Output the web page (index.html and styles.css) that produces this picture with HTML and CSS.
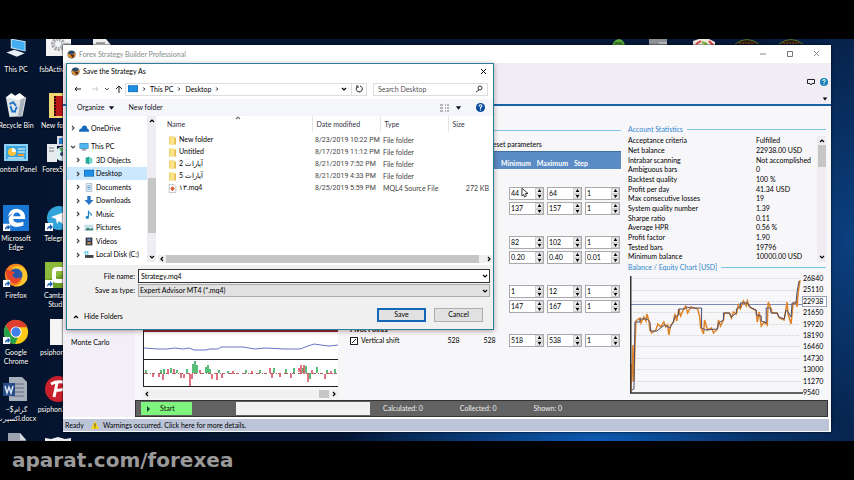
FILE: index.html
```
<!DOCTYPE html>
<html lang="en">
<head>
  <meta charset="UTF-8">
  <meta name="viewport" content="width=device-width, initial-scale=1.0">
  <title>Forex Strategy Builder Professional</title>
  <link rel="stylesheet" href="styles.css">
</head>
<body>
  <svg width="0" height="0" class="defs">
    <symbol id="fsb" viewBox="0 0 16 16"><circle cx="8" cy="8" r="7" fill="#2b4a6a"/><path d="M1 5q6 7 14-1 1 9-7 11Q1 14 1 5" fill="#e8952a"/><path d="M6 9l4 5 4-6" fill="#5a2a10"/></symbol>
    <symbol id="folder" viewBox="0 0 16 16"><path d="M2 1h8l4 2v12H2z" fill="#f0cd58"/><path d="M4 1h7v14H4z" fill="#fae48d"/><path d="M13 3v12" stroke="#c9a339"/></symbol>
    <symbol id="shortcut" viewBox="0 0 8 8"><path d="M0 0h8v8H0z" fill="#fff"/><path d="M2 7q0-4 3-4V1l3 3-3 3V5Q3 5 2 7" fill="#1c5fb0"/></symbol>
    <symbol id="monitor" viewBox="0 0 16 16"><path d="M0 2h16v10H0z" fill="#2a7fb8"/><path d="M1 3h14v8H1z" fill="#4cb6ee"/><path d="M4 14h8" stroke="#777" stroke-width="2"/></symbol>
    <symbol id="screen" viewBox="0 0 16 12"><path d="M0 0h16v11H0z" fill="#1466ad"/><path d="M1 1h14v9H1z" fill="#1c90e4"/></symbol>
    <symbol id="help" viewBox="0 0 16 16"><circle cx="8" cy="8" r="8" fill="currentColor"/><path d="M5.500 6q0-3 2.500-3t2.500 2.500Q10.500 7 8 8v2M8 11.500v2" stroke="#fff" stroke-width="2" fill="none"/></symbol>
    <symbol id="right" viewBox="0 0 8 8"><path d="M3 2l2 2-2 2" fill="none" stroke="currentColor" stroke-width="1.200"/></symbol>
    <symbol id="left" viewBox="0 0 8 8"><path d="M5 2L3 4l2 2" fill="none" stroke="currentColor" stroke-width="1.200"/></symbol>
    <symbol id="down" viewBox="0 0 8 8"><path d="M2 3l2 2 2-2" fill="none" stroke="currentColor" stroke-width="1.200"/></symbol>
    <symbol id="up" viewBox="0 0 8 8"><path d="M2 5l2-2 2 2" fill="none" stroke="currentColor" stroke-width="1.200"/></symbol>
    <symbol id="close" viewBox="0 0 8 8"><path d="M1 1l5 5M6 1L1 6" fill="none" stroke="currentColor"/></symbol>
    <symbol id="caret" viewBox="0 0 8 8"><path d="M1 2h6L4 6z" fill="currentColor"/></symbol>
  </svg>

  <main class="desktop">
    <div class="shortcut pc">
      <svg viewBox="0 0 30 24"><path d="M9 0l17 3v12L9 11z" fill="#d5eefa"/><path d="M10 1l15 3v10L10 10z" fill="#45aef2"/><path d="M4 16l9-3 12 4-9 4z" fill="#e8f0f5"/></svg>
      <span>This PC</span>
    </div>
    <div class="shortcut bin">
      <svg viewBox="0 0 26 28"><path d="M2 5l22 1-4 20-14 1z" fill="#dfe4e8"/><path d="M3 5l5-4 4 3 5-3 6 5-8 3z" fill="#fff"/><path d="M18 8l5-2-4 20-4 1z" fill="#aab2ba"/><path d="M6 13l4-2 3 4M7 15l2 6h4M14 16l-2 4" stroke="#1e72c6" stroke-width="2" fill="none"/></svg>
      <span>Recycle Bin</span>
    </div>
    <div class="shortcut panel">
      <svg viewBox="0 0 26 20"><path d="M1 2h24v17H1z" fill="#8ed1f2"/><path d="M3 4h20v13H3z" fill="#3ca4dc"/><circle cx="9" cy="10" r="4" fill="#ffc43a"/><path d="M9 10V6a4 4 0 0 1 4 4z" fill="#fff"/><path d="M15 7h7M15 10h7M5 16h16" stroke="#fff"/><path d="M15 13h6" stroke="#ff9c2a" stroke-width="2"/></svg>
      <span>Control Panel</span>
    </div>
    <div class="shortcut edge">
      <svg viewBox="0 0 28 28"><path d="M0 0h28v28H0z" fill="#1976d2"/><path d="M5 13Q7 4 15 4q9 1 9 11H11q1 6 11 3v4q-15 5-16-6 0-4 5-7-4 1-6 4m6-1h8q-1-4-4-4-3 0-4 4" fill="#fff"/><use href="#shortcut" y="20" width="8" height="8"/></svg>
      <span>Microsoft<br>Edge</span>
    </div>
    <div class="shortcut firefox">
      <svg viewBox="0 0 28 28"><circle cx="14" cy="14" r="12" fill="#f5841f"/><path d="M6 3l4 3q6-4 12 0 6 6 4 13-5 9-15 7 10-1 9-10 0-6-8-8z" fill="#ffc62e"/><circle cx="14" cy="14" r="7" fill="#2457a8"/><path d="M3 8q3 0 6 2l4 1-3 3q3 6 9 2-1 8-8 7Q3 20 3 8" fill="#e6452c"/><use href="#shortcut" y="19" width="8" height="8"/></svg>
      <span>Firefox</span>
    </div>
    <div class="shortcut chrome">
      <svg viewBox="0 0 28 28"><circle cx="14" cy="14" r="13" fill="#fbc917"/><path d="M3 7a13 13 0 0 1 23 2H14a6 6 0 0 0-5 8z" fill="#df3d2e"/><path d="M3 7l6 10q2 4 7 3l-3 7A13 13 0 0 1 3 7" fill="#27a04b"/><circle cx="14" cy="14" r="6" fill="#fff"/><circle cx="14" cy="14" r="5" fill="#3f7fe8"/><use href="#shortcut" y="19" width="8" height="8"/></svg>
      <span>Google<br>Chrome</span>
    </div>
    <div class="shortcut docx">
      <svg viewBox="0 0 26 26"><path d="M6 1h13l5 5v19H6z" fill="#a7afbb"/><path d="M9 8h12M9 12h12M9 16h12M9 20h12" stroke="#616d80"/><path d="M0 7h12v13H0z" fill="#264d87"/><path d="M2 10l2 7 2-6 2 6 2-7" fill="none" stroke="#dce5f3" stroke-width="1.500"/></svg>
      <span>~$گرام<br>اکسپرت.docx</span>
    </div>
    <div class="shortcut doc">
      <svg viewBox="0 0 26 26"><path d="M5 0h12l6 7v19H5z" fill="#9ca2af"/><path d="M17 0v7h6" fill="#d5d9e0"/></svg>
    </div>
    <div class="shortcut act">
      <svg viewBox="0 0 26 26"><path d="M1 0h25v20H1z" fill="#f4f4f4"/><circle cx="13" cy="8" r="5" fill="none" stroke="#a5a9ad" stroke-width="4" stroke-dasharray="2 1"/><circle cx="22" cy="12" r="4" fill="none" stroke="#b5b9bd" stroke-width="3"/></svg>
      <span>fsbActivator</span>
    </div>
    <div class="shortcut newf">
      <svg viewBox="0 0 26 26"><path d="M4 1h15l4 3v22H4z" fill="#f2d675"/><path d="M9 4h14v20H9z" fill="#b81818"/><path d="M10 4v20M21 4v20" stroke="#320505" stroke-width="2" stroke-dasharray="2 1"/></svg>
      <span>New folder</span>
    </div>
    <div class="shortcut fst">
      <svg viewBox="0 0 26 26"><path d="M2 8h10v18H2z" fill="#e8ebed"/><path d="M12 0h11v10H12z" fill="#d4dadf"/><path d="M14 2h9v6h-9z" fill="#2879c7"/><circle cx="17" cy="18" r="7" fill="#d9eff0"/><circle cx="17" cy="18" r="2" fill="#347"/><path d="M4 12h5M4 15h5" stroke="#777"/><path d="M14 12l5 0-2 5" fill="#4aa860"/></svg>
      <span>ForexStrat</span>
    </div>
    <div class="shortcut tel">
      <svg viewBox="0 0 26 26"><circle cx="14" cy="13" r="12" fill="#34a5dc"/><path d="M6 12l16-6-3 14-5-4-2 3-1-5z" fill="#fff"/><use href="#shortcut" y="18" width="8" height="8"/></svg>
      <span>Telegram</span>
    </div>
    <div class="shortcut cam">
      <svg viewBox="0 0 26 26"><path d="M0 0h26v26H0z" fill="#6d9f2b"/><path d="M0 0h26v10L0 18z" fill="#8cbb3c"/><path d="M22 7H12q-3 0-3 3v6q0 3 3 3h10" fill="none" stroke="#fff" stroke-width="4"/><use href="#shortcut" y="18" width="8" height="8"/></svg>
      <span>Camtasia<br>Studio</span>
    </div>
    <div class="shortcut psi">
      <svg viewBox="0 0 26 26"><path d="M5 0h17v26H5z" fill="#f5f5f5"/></svg>
      <span>psiphon.dat</span>
    </div>
    <div class="shortcut psi3">
      <svg viewBox="0 0 26 26"><circle cx="13" cy="13" r="13" fill="#c8202c"/><path d="M6 8q5-3 12-2 6 2 2 6-3 3-9 2M12 7l-3 14" fill="none" stroke="#fff" stroke-width="3"/></svg>
      <span>psiphon3.exe</span>
    </div>
    <div class="shortcut last">
      <svg viewBox="0 0 26 8"><path d="M0 1l6 1 7-2 7 2 6-1v7H0z" fill="#eee"/><path d="M4 4q4 4 8 0M15 4q4 4 8 0" stroke="#222" fill="none"/></svg>
    </div>
    <svg class="toprow" viewBox="0 0 720 6"><path d="M0 0h13l5 6H0z" fill="#eee"/><path d="M3 4h9" stroke="#555"/><path d="M519 6q3-6 7-6t6 6" fill="#58a83c"/><path d="M522 4h7" stroke="#143d10"/><path d="M556 0h18v6h-18z" fill="#8d9196"/><path d="M566 4h8" stroke="#ddd"/><path d="M600 6V2l6-2h10l6 3v3z" fill="#f1e6de"/><path d="M603 5l5-3M616 2l4 4" stroke="#d84040" stroke-width="2"/><path d="M609 3l5 2" stroke="#73b82e" stroke-width="2"/><path d="M642 5q12-9 24 0M686 5q12-9 24 0" fill="#241a10" stroke="#55722a"/><path d="M646 4h16M690 4h16" stroke="#a4451f" stroke-dasharray="2 1"/></svg>

    <section class="window">
      <header class="titlebar">
        <svg class="ico"><use href="#fsb"/></svg>
        <h1>Forex Strategy Builder Professional</h1>
        <div class="winbuttons">
          <button aria-label="Minimize"><svg viewBox="0 0 8 8"><path d="M1 4h6" stroke="#888"/></svg></button>
          <button aria-label="Maximize"><svg viewBox="0 0 8 8"><path d="M1.500 1.500h5v5h-5z" fill="none" stroke="#777"/></svg></button>
          <button aria-label="Close"><svg><use href="#close"/></svg></button>
        </div>
      </header>
      <div class="ribbon">
        <div class="ribbontools">
          <button aria-label="Comments"><svg viewBox="0 0 8 8"><path d="M.5 1.500h7v4H5L4 7 3 5.500H.5z" fill="none" stroke="#222"/></svg></button>
          <button class="helpbtn" aria-label="Help"><svg><use href="#help"/></svg></button>
        </div>
        <svg class="ribboncaret"><use href="#caret"/></svg>
      </div>
      <div class="body">
        <nav class="side"><a href="#">Monte Carlo</a></nav>
        <div class="work">
          <div class="columns">
            <div class="minis">
              <svg viewBox="0 0 195 57" preserveAspectRatio="none">
                <path d="M0 0h195v2H0z" fill="#842434"/><path d="M.5 0v57M0 29.500h195M0 56.500h195" stroke="#222"/>
                <path d="M1 18l14 1 9 0 8-1 8 1 6-1 5 2h12l4-1h8l3-2 12 0h10l12 2 10-1 20 1h15l8-3 6-2 7 1 8 1 9-1" fill="none" stroke="#6d73c8"/>
                <path d="M1 43.500h193" stroke="#b36060" stroke-dasharray="4 2 1 1 3 3"/>
                <path d="M3 43v-3M18 43v-3M21 44v-5M28 43v-5M34 43v-3M44 43v-4M50 43V34M52 43V31M54 43v-8M63 43v-6M65 43V35M67 43v-4M76 43v-3M85 43v-2M103 43v-3M117 43v-3M131 43V38M143 43v-4M151 43v-5M160 43v-5M163 43V36M167 49v-6M174 43V37M184 43v-3M192 43v-4" stroke="#22a84c" stroke-width="1.500"/>
                <path d="M10 44v3M16 44v3M20 44v6M25 39v5M31 39v4M38 44v4M41 44v4M47 44V56M49 44v5M57 43v-3M69 44v5M74 44v6M79 44v4M90 41v3M109 41v3M127 43v-5M129 44v4M137 44v3M148 44v4M156 42v-4M158 44v-9M161 44v-9M165 44v8M169 44v-4M182 44v5M188 41v3" stroke="#d3435a" stroke-width="1.500"/>
              </svg>
              <div class="hscroll"><svg><use href="#left"/></svg><i></i><svg><use href="#right"/></svg></div>
            </div>
            <div class="params">
              <p class="preset">Preset parameters</p>
              <div class="phead"><b>Minimum</b><b>Maximum</b><b>Step</b></div>
              <div class="groups" id="groups"></div>
            </div>
            <aside class="stats">
              <h2>Account Statistics</h2>
              <div class="statbox">
                <table><tbody id="stats"></tbody></table>
                <div class="vscroll"><svg><use href="#up"/></svg><i></i><svg><use href="#down"/></svg></div>
              </div>
              <h2>Balance / Equity Chart [USD]</h2>
              <div class="chart">
                <svg viewBox="0 0 174 118" preserveAspectRatio="none">
                  <path d="M3 2.500h168M3 14.500h168M3 25.500h168M3 36.500h168M3 48.500h168M3 59.500h168M3 70.500h168M3 82.500h168M3 93.500h168M3 105.500h168" stroke="#dcdce0" stroke-dasharray="3 1"/>
                  <path d="M0 28.500h174" stroke="#8088b4"/>
                  <path d="M1 116L1 88 2 106 3 69 4 105 5 70 6 45 10 42 11 47 14 41 16 45 17 38 19 45 20 54 22 57 26 54 28 48 31 51 34 46 36 51 38 49 39 59 41 49 44 46 45 38 47 45 49 33 51 40 54 33 56 30 58 37 61 31 68 33 70 40 71 51 74 58 75 44 78 54 82 52 84 57 88 53 89 44 91 50 94 44 95 37 100 37 102 42 104 36 107 38 109 29 111 33 114 25 117 30 118 25 120 31 124 33 127 35 128 46 130 36 132 50 135 46 138 49 139 26 142 33 143 37 148 37 150 42 155 44 158 26 159 38 162 48 164 28 167 26 168 31 169 18 171 4" fill="none" stroke="#dd8428" stroke-width="1.500"/>
                  <path d="M2 114L4 113 5 46 10 46 10 43 17 43 20 46 21 55 27 55 32 51 35 49 40 52 43 47 45 41 49 39 49 33 55 33 57 31 61 32 72 32 72 52 76 54 88 53 89 47 94 44 94 37 100 37 102 41 107 37 107 33 111 31 111 27 118 27 122 32 127 34 127 39 132 40 132 45 137 47 137 32 141 32 142 37 148 37 150 41 155 43 157 34 159 36 162 41 163 27 167 27 168 16 170 5" fill="none" stroke="#4c4c6c"/>
                  <path d="M.75 0v117H174" fill="none" stroke="#333" stroke-width="1.500"/>
                </svg>
                <ol class="axis"><li>26840</li><li>25110</li><li class="now">22938</li><li>21650</li><li>19920</li><li>18190</li><li>16460</li><li>14730</li><li>13000</li><li>11270</li><li>9540</li></ol>
              </div>
            </aside>
          </div>
          <div class="runbar">
            <button class="start"><svg viewBox="0 0 8 8"><path d="M2 1l3 3-3 3z" fill="#143"/></svg>Start</button>
            <div class="progress"></div>
            <span>Calculated: 0</span><span>Collected: 0</span><span>Shown: 0</span>
          </div>
        </div>
      </div>
      <footer class="status">
        <span>Ready</span>
        <svg viewBox="0 0 10 10"><path d="M5 0l5 10H0z" fill="#f7d117"/><path d="M5 3v4M5 8v1" stroke="#222"/></svg>
        <a href="#">Warnings occurred. Click here for more details.</a>
      </footer>
    </section>

    <section class="dialog" role="dialog" aria-label="Save the Strategy As">
      <header class="dtitle">
        <svg class="ico"><use href="#fsb"/></svg><h2>Save the Strategy As</h2>
        <button aria-label="Close"><svg><use href="#close"/></svg></button>
      </header>
      <div class="nav">
        <svg class="arrows" viewBox="0 0 52 8"><path d="M8 4H2M4 2L2 4l2 2" fill="none" stroke="#222"/><path d="M19 4h6M23 2l2 2-2 2" fill="none" stroke="#ccc"/><path d="M32 3l2 2 2-2" fill="none" stroke="#555"/><path d="M46 8V1M43 4l3-3 3 3" fill="none" stroke="#222"/></svg>
        <div class="address">
          <svg class="scr"><use href="#screen"/></svg><svg><use href="#right"/></svg><span>This PC</span><svg><use href="#right"/></svg><span>Desktop</span><svg><use href="#right"/></svg>
          <svg class="push"><use href="#down"/></svg>
          <button aria-label="Refresh"><svg viewBox="0 0 8 8"><path d="M5 1a3 3 0 1 1-3 1V0M2 2h2" fill="none" stroke="#222"/></svg></button>
        </div>
        <div class="search"><input type="text" placeholder="Search Desktop" aria-label="Search Desktop"><svg viewBox="0 0 8 8"><circle cx="5" cy="3" r="2" fill="none" stroke="#333"/><path d="M4 5L1 7" stroke="#333"/></svg></div>
      </div>
      <div class="tools">
        <button>Organize <svg><use href="#caret"/></svg></button>
        <button>New folder</button>
        <button class="view" aria-label="View"><svg viewBox="0 0 10 8"><path d="M0 1h3M0 4h3M0 7h3M5 1h1M7 1h2M5 4h1M7 4h2M5 7h1M7 7h2" stroke="#777"/></svg><svg class="c"><use href="#caret"/></svg></button>
        <button class="helpbtn" aria-label="Help"><svg><use href="#help"/></svg></button>
      </div>
      <div class="browser">
        <ul class="tree">
          <li class="top gap"><svg class="x"><use href="#right"/></svg><svg class="i" viewBox="0 0 16 12"><path d="M0 11q0-5 4-5 1-5 5-5t4 5q3 0 3 5z" fill="#1569bd"/></svg>OneDrive</li>
          <li class="top"><svg class="x"><use href="#down"/></svg><svg class="i"><use href="#monitor"/></svg>This PC</li>
          <li><svg class="x"><use href="#right"/></svg><svg class="i" viewBox="0 0 16 16"><path d="M2 3l7-2v14l-7-2z" fill="#25a99c"/><path d="M9 2l5 2v8l-5 2z" fill="#6fd8cc"/></svg>3D Objects</li>
          <li class="on"><svg class="x"><use href="#right"/></svg><svg class="i"><use href="#screen"/></svg>Desktop</li>
          <li><svg class="x"><use href="#right"/></svg><svg class="i" viewBox="0 0 16 16"><path d="M3 1h10v14H3z" fill="#f3f7fa" stroke="#7c93a6"/><path d="M5 5h6M5 8h6M5 11h6" stroke="#3c8dca" stroke-width="1.500"/></svg>Documents</li>
          <li><svg class="x"><use href="#right"/></svg><svg class="i" viewBox="0 0 16 16"><path d="M5 0h6v7h5l-8 9-8-9h5z" fill="#2876c4"/></svg>Downloads</li>
          <li><svg class="x"><use href="#right"/></svg><svg class="i" viewBox="0 0 16 16"><path d="M7 1v11M7 2q1 4 5 5v3" fill="none" stroke="#1f86cf" stroke-width="2"/><circle cx="5" cy="13" r="3" fill="#1f86cf"/></svg>Music</li>
          <li><svg class="x"><use href="#right"/></svg><svg class="i" viewBox="0 0 16 16"><path d="M0 3h16v11H0z" fill="#c4dfeb"/><path d="M1 13l5-5 4 3 5-2v4z" fill="#357a61"/></svg>Pictures</li>
          <li><svg class="x"><use href="#right"/></svg><svg class="i" viewBox="0 0 16 16"><path d="M2 1h12v14H2z" fill="#36383f"/><path d="M5 3h6v4H5z" fill="#6a8ac0"/><path d="M5 9h6v4H5z" fill="#b38a5a"/></svg>Videos</li>
          <li><svg class="x"><use href="#right"/></svg><svg class="i" viewBox="0 0 16 16"><path d="M1 9h15v5H1z" fill="#3b4046"/><path d="M0 2h3v3H0zM4 2h3v3H4zM0 6h3v2H0zM4 6h3v2H4z" fill="#2fb5da"/></svg>Local Disk (C:)</li>
        </ul>
        <div class="vscroll"><svg><use href="#up"/></svg><i></i><svg><use href="#down"/></svg></div>
        <div class="files">
          <svg class="sort"><use href="#up"/></svg>
          <table>
            <thead><tr><th class="n">Name</th><th class="d">Date modified</th><th class="t">Type</th><th class="s">Size</th></tr></thead>
            <tbody>
              <tr><td><svg><use href="#folder"/></svg>New folder</td><td>8/23/2019 10:22 PM</td><td>File folder</td><td></td></tr>
              <tr><td><svg><use href="#folder"/></svg>Untitled</td><td>8/17/2019 11:12 PM</td><td>File folder</td><td></td></tr>
              <tr><td><svg><use href="#folder"/></svg>آپارات 2</td><td>8/21/2019 7:52 PM</td><td>File folder</td><td></td></tr>
              <tr><td><svg><use href="#folder"/></svg>آپارات 5</td><td>8/21/2019 4:33 PM</td><td>File folder</td><td></td></tr>
              <tr><td><svg viewBox="0 0 16 16"><path d="M2 1h9l3 3v11H2z" fill="#fff" stroke="#999"/><path d="M8 4l4 4-4 5-4-5z" fill="#d9542b"/></svg>۱۳.mq4</td><td>8/25/2019 5:59 PM</td><td>MQL4 Source File</td><td>272 KB</td></tr>
            </tbody>
          </table>
          <div class="hscroll"><svg><use href="#left"/></svg><i></i><svg><use href="#right"/></svg></div>
        </div>
      </div>
      <form class="save">
        <label for="fname">File name:</label>
        <div class="combo"><input id="fname" type="text" value="Strategy.mq4"><svg><use href="#down"/></svg></div>
        <label for="ftype">Save as type:</label>
        <div class="combo type"><select id="ftype"><option>Expert Advisor MT4 (*.mq4)</option></select><svg><use href="#down"/></svg></div>
      </form>
      <div class="actions">
        <button class="hide"><svg><use href="#up"/></svg>Hide Folders</button>
        <button class="ok">Save</button><button class="cancel">Cancel</button>
      </div>
    </section>
    <svg class="cursor" viewBox="0 0 8 11"><path d="M1 0v9l2-2 1 3 2-1-1-3h3z" fill="#fff" stroke="#222"/></svg>
  </main>
  <div class="watermark">aparat.com/forexea</div>
  <script src="script.js"></script>
</body>
</html>
```
FILE: styles.css
```
:root{--font:Lato,"Liberation Sans",sans-serif;--blue:#2f86cf;--line:#7cc4e6}
*{box-sizing:border-box}
body{margin:0;height:100vh;background:#000;color:#000;font:7px/9px var(--font);display:flex;flex-direction:column;padding-top:39px;overflow:hidden}
h1,h2,p,ul,ol{margin:0;padding:0;font-size:inherit;font-weight:normal;list-style:none}
a{color:inherit;text-decoration:none}
button,input,select{font:inherit;color:inherit;margin:0;padding:0;border:0;background:none;border-radius:0}
button{display:flex;align-items:center;justify-content:center}
svg{display:block;width:8px;height:8px;flex:none}
table{border-collapse:collapse}
th,td{padding:0;font-weight:normal;text-align:left}
.defs{position:absolute;width:0;height:0}
.ico{width:9px;height:9px}

/* desktop */
.desktop{flex:1;position:relative;overflow:hidden;background:radial-gradient(ellipse 260px 50px at 70% 100%,#0d5cb4,transparent),radial-gradient(ellipse 140px 260px at 100% 50%,#0b4080,transparent),linear-gradient(90deg,#04142f,#051a3c)}
.watermark{height:39px;padding-left:12px;color:#9a9a9a;font:bold 20px/39px "DejaVu Sans",sans-serif}
.shortcut{position:absolute;width:40px;display:flex;flex-direction:column;align-items:center;gap:3px;color:#fff;text-align:center;white-space:nowrap;text-shadow:0 1px 1px #000}
.shortcut svg{width:26px;height:26px}
.pc,.bin,.panel,.edge,.firefox,.chrome,.docx,.doc{left:-4px}
.act,.newf,.fst,.tel,.cam,.psi,.psi3,.last{left:38px}
.pc,.act{top:-3px}
.bin,.newf{top:53px}
.panel,.fst{top:97px}
.panel svg{padding-top:6px}
.edge,.tel{top:166px}
.firefox,.cam{top:223px}
.chrome,.psi{top:280px}
.docx,.psi3{top:337px}
.doc{top:394px}
.last{top:389px}
.toprow{position:absolute;left:93px;top:0;width:720px;height:6px}

/* main window */
.window{position:absolute;left:63px;right:23px;top:6px;bottom:9px;background:#f7f6f8;display:flex;flex-direction:column;box-shadow:0 0 2px #000}
.titlebar{height:18px;background:#fff;display:flex;align-items:center;gap:3px;padding:0 10px 0 4px;color:#888}
.winbuttons{margin-left:auto;display:flex;gap:19px}
.ribbon{height:43px;background:#f1edf4;border-bottom:2px solid #1763a6;padding:15px 3px 0;display:flex;flex-direction:column;align-items:flex-end;gap:10px}
.ribbontools{display:flex;align-items:center;gap:5px}
.helpbtn{color:#1683b8}
.ribboncaret{width:6px;height:6px}
.body{flex:1;display:flex;min-height:0}
.side{width:72px;background:#f2eff7;padding:232px 0 0 8px}
.work{flex:1;display:flex;flex-direction:column;min-width:0}
.columns{flex:1;display:flex;min-height:0}
.minis{flex:none;width:207px;padding:224px 4px 0 8px;display:flex;flex-direction:column;gap:3px}
.minis>svg{width:100%;height:57px;background:#fff}
.hscroll{display:flex;align-items:center;background:#f0f0f0;height:8px}
.minis .hscroll i{width:10px;height:8px;background:#c6c6c6;margin-left:auto;margin-right:1px}
.params{flex:1;min-width:0;padding-top:24px}
.preset{border-top:1px solid var(--line);padding:9px 0 0 144px}
.phead{height:18px;margin-top:2px;background:#5a8bc5;color:#fff;display:flex;align-items:flex-end;gap:6px;padding:0 33px 1px 0;justify-content:flex-end;border-top:1px solid #3f6da5}
.phead b{font-weight:bold}
.groups{display:flex;flex-direction:column;gap:21px;padding:18px 1px 0 8px}
.group{display:flex;flex-direction:column;gap:2px}
.row{display:flex;align-items:center;gap:3px;height:13px}
.row label{display:flex;align-items:center;gap:3px;width:84px}
.row label input{appearance:none;width:8px;height:8px;border:1px solid #222;background:#fff linear-gradient(135deg,transparent 40%,#222 40% 60%,transparent 60%) center/4px 4px no-repeat}
.row output{width:33px;text-align:center}
.row .spin:first-of-type{margin-left:auto}
.spin{display:flex;width:35px;height:13px;background:#fff;border:1px solid #a9a9ad}
.spin input{flex:1;min-width:0;padding-left:1px}
.spin>div{display:flex;flex-direction:column;width:8px}
.spin button{flex:1;height:5px;background:#eee;border:1px solid #d0d0d0}
.spin svg{width:5px;height:3px}
.group h3{margin:-9px 0 -2px;font-size:7px;line-height:9px}

/* statistics */
.stats{width:203px;flex:none;padding:18px 5px 0 0;margin-left:7px}
.stats h2{display:flex;align-items:center;gap:4px;color:var(--blue);line-height:11px;white-space:nowrap}
.stats h2::after{content:"";flex:1;height:1px;background:var(--line)}
.statbox{display:flex;height:127px;padding-top:1px}
.statbox table{flex:1;align-self:flex-start}
.statbox td{height:10px;white-space:nowrap}
.statbox td:first-child{width:128px}
.statbox tr:nth-child(3n+1) td{height:9px}
.vscroll{width:9px;background:#f0edf2;display:flex;flex-direction:column;align-items:center;padding:1px 0}
.vscroll i{width:8px;height:22px;background:#c6c6c6}
.vscroll svg:last-child{margin-top:auto}
.chart{display:flex;padding:3px 0 0 2px}
.chart>svg{width:auto;flex:1;min-width:0;height:118px}
.axis{width:23px;height:123px;margin:-2px 0 -5px;display:flex;flex-direction:column;justify-content:space-between}
.axis .now{background:#fff;outline:1px solid #9aa0b8}

.runbar{height:17px;margin-right:3px;background:#626262;border:1px solid #333;color:#eee;display:flex;align-items:center;padding-left:5px}
.start{width:51px;height:13px;background:#80f57e;color:#111;justify-content:flex-start;gap:7px;padding-left:4px}
.progress{width:134px;height:13px;background:#f2f2f2;margin:0 13px 0 44px}
.runbar span{margin-right:37px}
.status{height:14px;border:solid #fff;border-width:2px 2px 0 0;margin-bottom:1px;background:#bcc5d8;display:flex;align-items:center;gap:4px;padding-left:2px}
.status svg{margin-left:3px}

/* save dialog */
.dialog{position:absolute;left:66px;top:24px;width:428px;height:267px;background:#fff;border:1px solid #2d7f9d;box-shadow:0 1px 5px rgba(60,20,20,.4);display:flex;flex-direction:column}
.dtitle{height:15px;display:flex;align-items:center;gap:3px;padding:0 5px 0 4px}
.dtitle button{margin-left:auto}
.nav{height:20px;display:flex;align-items:center;padding:0 5px 0 6px}
.arrows{width:52px}
.address{flex:1;height:13px;border:1px solid #ddd;display:flex;align-items:center;gap:3px;padding:0 0 0 2px}
.address svg{width:6px;height:8px}
.address .scr{width:10px}
.address .push,.address button svg{width:8px}
.address .push{margin-left:auto}
.address button{width:15px;height:11px;border-left:1px solid #ddd}
.search{width:115px;height:13px;border:1px solid #ddd;margin-left:6px;display:flex;align-items:center;padding:0 4px}
.search input{flex:1;min-width:0}
.search input::placeholder{color:#555;opacity:1}
.tools{height:17px;background:#f5f6fa;display:flex;align-items:center;gap:14px;padding:0 8px 0 10px;color:#112}
.tools svg{width:7px}
.tools button{gap:3px}
.tools .view{margin-left:auto;gap:5px}
.tools .view svg:first-child{width:10px}
.tools .helpbtn{color:#0a4a9e}
.tools .helpbtn svg{width:9px;height:9px}
.browser{flex:1;display:flex;min-height:0}
.tree{width:80px;padding-top:5px;white-space:nowrap;overflow:hidden}
.tree li{height:14px;display:flex;align-items:center;gap:2px;padding-left:7px}
.tree li:nth-child(even){height:13px}
.tree .top{padding-left:2px}
.tree .gap{margin-bottom:5px}
.tree .on{background:#cce8ff}
.tree .x{color:#444}
.tree .i{width:10px;height:9px}
.tree+.vscroll{height:146px}
.tree+.vscroll i{height:55px;margin-top:53px}
.files{flex:1;display:flex;flex-direction:column;position:relative;padding-left:2px}
.sort{position:absolute;left:78px;top:-2px;color:#777}
.files table{table-layout:fixed;width:100%}
.files th{height:16px;color:#334;border-right:1px solid #e4e4e4;padding-left:4px}
.files .n{width:154px;padding-left:9px}
.files .d{width:68px}
.files .t{width:68px}
.files .s{border:0}
.files td{height:12px;padding-left:3px;white-space:nowrap;color:#444}
.files td:first-child{padding-left:10px;color:#000}
.files td:nth-child(2){font-family:Roboto,sans-serif}
.files td:last-child{text-align:right;padding-right:4px}
.files td svg{display:inline-block;width:9px;height:9px;margin-right:2px;vertical-align:middle}
.files tbody::before{content:"";display:block;height:2px}
.files .hscroll{margin-top:auto;margin-bottom:2px}
.files .hscroll i{flex:1;height:8px;background:#c6c6c6;margin-right:6px}
.save{display:grid;grid-template-columns:68px 1fr;gap:1px 3px;align-items:center;background:#f0f0f0;padding:4px 3px 0 0}
.save label{text-align:right}
.combo{display:flex;align-items:center;height:14px;border:1px solid #333;background:#fff;padding:0 0 0 2px}
.combo input,.combo select{flex:1;min-width:0;appearance:none}
.combo.type{height:13px;border-color:#aaa;background:#e1e1e1;padding-left:1px}
.actions{height:32px;background:#f0f0f0;display:flex;align-items:center;padding:3px 10px 0 5px;gap:8px}
.hide{margin-right:auto;gap:4px;padding-top:4px}
.ok,.cancel{width:49px;height:14px;background:#e1e1e1;border:1px solid #adadad}
.ok{border:2px solid #1268b8}
.cursor{position:absolute;left:521px;top:149px;width:7px;height:10px}
```
FILE: script.js
```
const groups=[
  {rows:[['44','64','1'],['137','157','1']]},
  {rows:[['82','102','1'],['0.20','0.40','0.01']]},
  {rows:[['1','12','1'],['147','167','1']]},
  {title:'Pivot Points',rows:[['518','538','1','Vertical shift','528']]}
];
const stats=[
  ['Acceptance criteria','Fulfilled'],
  ['Net balance','22938.00 USD'],
  ['Intrabar scanning','Not accomplished'],
  ['Ambiguous bars','0'],
  ['Backtest quality','100 %'],
  ['Profit per day','41.34 USD'],
  ['Max consecutive losses','19'],
  ['System quality number','1.39'],
  ['Sharpe ratio','0.11'],
  ['Average HPR','0.56 %'],
  ['Profit factor','1.90'],
  ['Tested bars','19796'],
  ['Minimum balance','10000.00 USD']
];
const names=['Minimum','Maximum','Step'];
const spin=(v,i)=>`<div class="spin"><input type="text" value="${v}" aria-label="${names[i]}"><div><button aria-label="Increase"><svg viewBox="0 0 5 4"><path d="M0 4l2.500-4L5 4z"/></svg></button><button aria-label="Decrease"><svg viewBox="0 0 5 4"><path d="M0 0h5L2.500 4z"/></svg></button></div></div>`;
document.getElementById('groups').innerHTML=groups.map(g=>`<div class="group">${g.title?`<h3>${g.title}</h3>`:''}${g.rows.map(r=>`<div class="row">${r[3]?`<label><input type="checkbox" checked>${r[3]}</label><output>${r[4]}</output><output>${r[4]}</output>`:''}${r.slice(0,3).map(spin).join('')}</div>`).join('')}</div>`).join('');
document.getElementById('stats').innerHTML=stats.map(s=>`<tr><td>${s[0]}</td><td>${s[1]}</td></tr>`).join('');
```
